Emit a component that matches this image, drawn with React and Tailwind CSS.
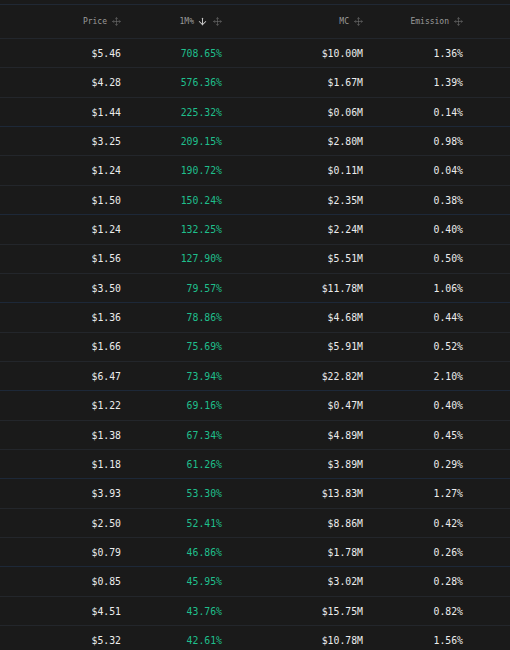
import React from 'react'
import { Move, ArrowDown } from 'lucide-react'

const rows = [
    ['$5.46', '708.65%', '$10.00M', '1.36%'],
    ['$4.28', '576.36%', '$1.67M', '1.39%'],
    ['$1.44', '225.32%', '$0.06M', '0.14%'],
    ['$3.25', '209.15%', '$2.80M', '0.98%'],
    ['$1.24', '190.72%', '$0.11M', '0.04%'],
    ['$1.50', '150.24%', '$2.35M', '0.38%'],
    ['$1.24', '132.25%', '$2.24M', '0.40%'],
    ['$1.56', '127.90%', '$5.51M', '0.50%'],
    ['$3.50', '79.57%', '$11.78M', '1.06%'],
    ['$1.36', '78.86%', '$4.68M', '0.44%'],
    ['$1.66', '75.69%', '$5.91M', '0.52%'],
    ['$6.47', '73.94%', '$22.82M', '2.10%'],
    ['$1.22', '69.16%', '$0.47M', '0.40%'],
    ['$1.38', '67.34%', '$4.89M', '0.45%'],
    ['$1.18', '61.26%', '$3.89M', '0.29%'],
    ['$3.93', '53.30%', '$13.83M', '1.27%'],
    ['$2.50', '52.41%', '$8.86M', '0.42%'],
    ['$0.79', '46.86%', '$1.78M', '0.26%'],
    ['$0.85', '45.95%', '$3.02M', '0.28%'],
    ['$4.51', '43.76%', '$15.75M', '0.82%'],
    ['$5.32', '42.61%', '$10.78M', '1.56%'],
]

const Head = ({ label, sort }) => (
    <div className="flex items-center justify-end">
        <span>{label}</span>
        {sort && <ArrowDown size={11} strokeWidth={2.2} className="text-[#c4c4c4] ml-[3px]" />}
        <Move size={9} strokeWidth={1.6} className="text-[#707070] ml-[5px]" />
    </div>
)

const App = () => {
    return (
        <div className="w-[510px] h-[650px] overflow-hidden bg-[#1a1a1a] pt-[4px] font-['DejaVu_Sans_Mono',monospace]">
            <div className="border-t border-[#202834]">
                <div className="flex items-center h-[34px] text-[8px] text-[#9a9a9a] border-b border-[#22262c]">
                    <div className="w-[121px]"><Head label="Price" /></div>
                    <div className="w-[101px]"><Head label="1M%" sort /></div>
                    <div className="w-[141px]"><Head label="MC" /></div>
                    <div className="w-[100px]"><Head label="Emission" /></div>
                </div>
                {rows.map((r, i) => (
                    <div
                        key={i}
                        className={`flex items-center h-[29.36px] pt-[2px] text-[9.8px] border-b ${i % 3 === 2 ? 'border-[#1d2838]' : 'border-[#23262b]'}`}
                    >
                        <div className="w-[121px] text-right text-[#ececec]">{r[0]}</div>
                        <div className="w-[101px] text-right text-[#1fbf8c]">{r[1]}</div>
                        <div className="w-[141px] text-right text-[#ececec]">{r[2]}</div>
                        <div className="w-[100px] text-right text-[#ececec]">{r[3]}</div>
                    </div>
                ))}
            </div>
        </div>
    )
}

export default App
